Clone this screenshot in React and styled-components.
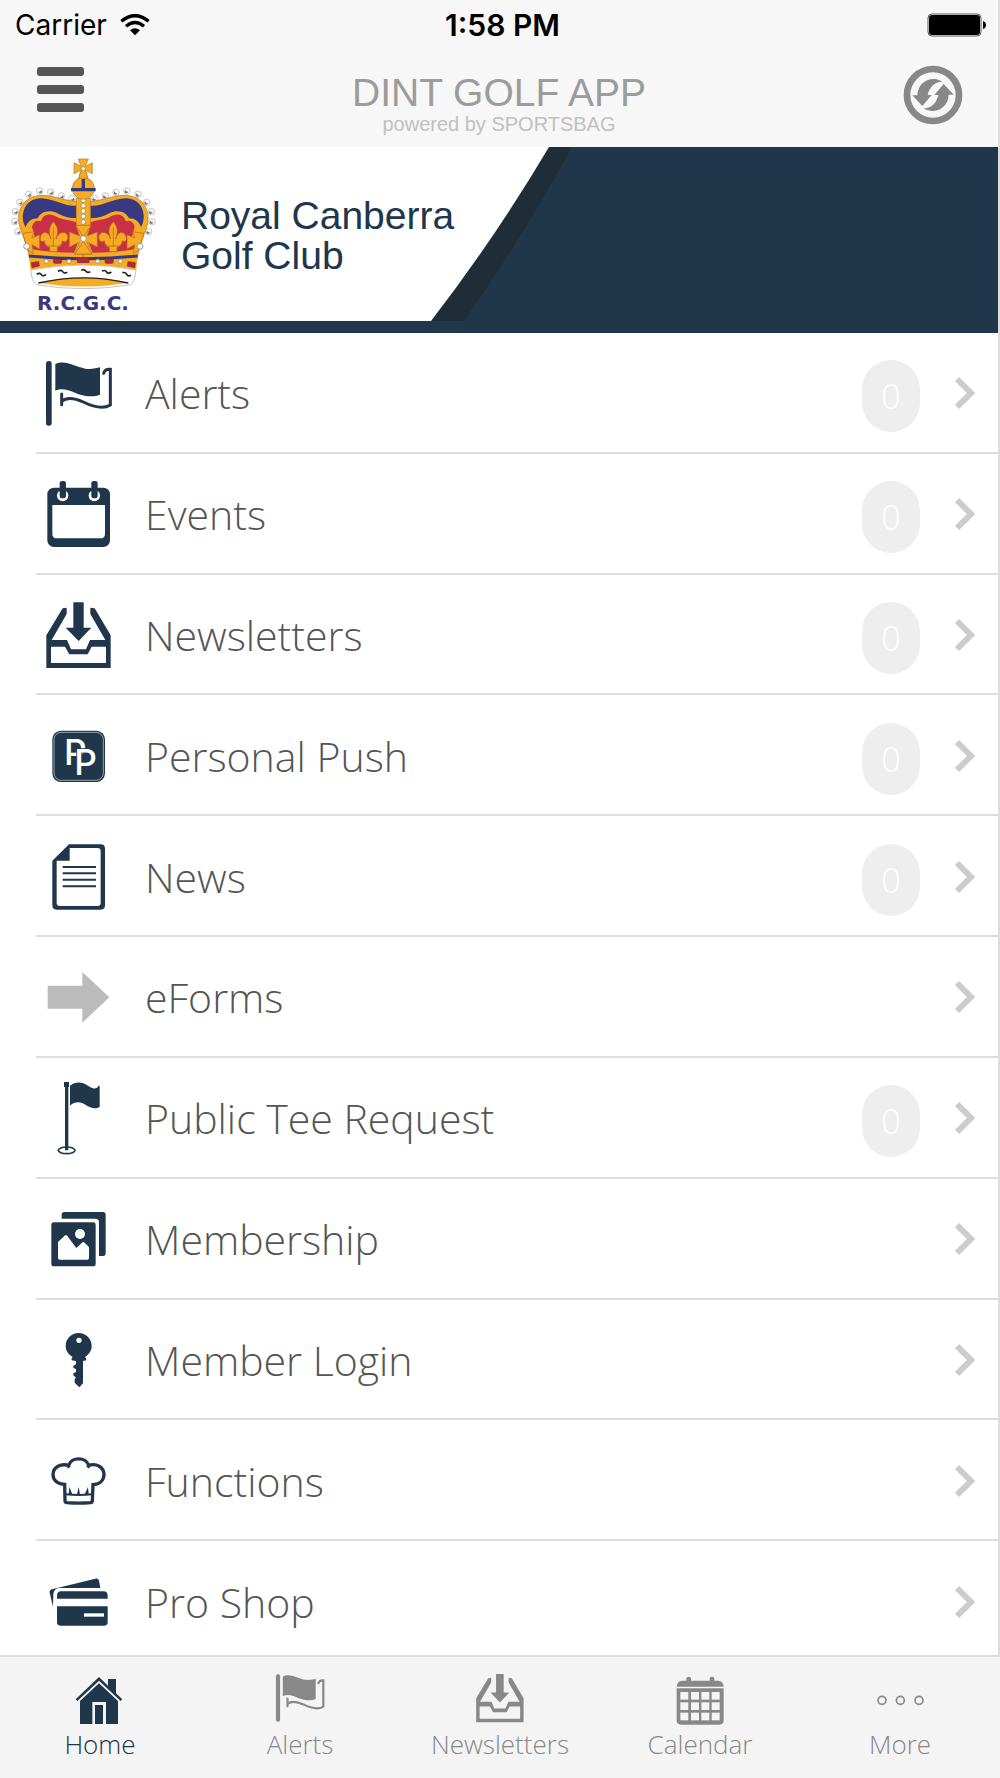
import React, { useState } from "react";
import styled, { createGlobalStyle } from "styled-components";

const GlobalStyle = createGlobalStyle`
  * {
    box-sizing: border-box;
  }

  body {
    margin: 0;
    background-color: #ffffff;
    font-family: "Open Sans", "Liberation Sans", sans-serif;
  }
`;

const Page = styled.div`
  display: flex;
  flex-direction: column;
  min-height: 100vh;
`;

const Screen = styled.div`
  flex: 1;
  display: flex;
  flex-direction: column;
  border-right: 2px solid #dddddd;
`;

const Header = styled.header`
  background-color: #f7f7f7;
`;

const StatusBar = styled.div`
  display: grid;
  grid-template-columns: 1fr auto 1fr;
  align-items: center;
  height: 50px;
  padding: 0 12px 0 15px;
  color: #000000;
  font-family: Inter, "Liberation Sans", sans-serif;
  font-size: 28px;
  line-height: 50px;
`;

const Carrier = styled.span`
  display: flex;
  align-items: center;
  gap: 13px;
`;

const Clock = styled.time`
  padding-left: 4px;
  font-size: 30px;
  font-weight: 600;
`;

const Battery = styled.svg`
  justify-self: end;
`;

const NavBar = styled.div`
  display: grid;
  grid-template-columns: 60px 1fr 60px;
  align-items: start;
  height: 97px;
  padding: 15px 35px 0;
`;

const IconButton = styled.button`
  display: flex;
  justify-content: center;
  align-items: center;
  height: 60px;
  padding: 0;
  border: none;
  background-color: transparent;
  cursor: pointer;
`;

const MenuButton = styled(IconButton)`
  flex-direction: column;
  align-items: flex-start;
  gap: 9px;
  height: 48px;
  padding-left: 2px;
`;

const MenuBar = styled.span`
  width: 47px;
  height: 9px;
  border-radius: 3px;
  background-color: #555555;
`;

const Brand = styled.div`
  padding-top: 8px;
  text-align: center;
  font-family: "Liberation Sans", Arial, sans-serif;
`;

const Title = styled.h1`
  margin: 0;
  color: #9c9c9c;
  font-size: 39px;
  font-weight: 400;
  line-height: 40px;
`;

const Subtitle = styled.p`
  margin: 0;
  color: #c0c0c0;
  font-size: 20px;
  line-height: 22px;
`;

const Banner = styled.section`
  position: relative;
  display: flex;
  align-items: flex-start;
  gap: 24px;
  height: 186px;
  padding: 8px 10px 0;
  background-color: #20374b;
`;

const BannerShape = styled.svg`
  position: absolute;
  top: 0;
  left: 0;
`;

const Crest = styled.svg`
  position: relative;
  flex: none;
`;

const ClubName = styled.h2`
  position: relative;
  margin: 0;
  padding-top: 41px;
  color: #20374b;
  font-family: "Liberation Sans", Arial, sans-serif;
  font-size: 39px;
  font-weight: 400;
  line-height: 40px;
`;

const Menu = styled.ul`
  flex: 1;
  display: grid;
  grid-auto-rows: minmax(100px, 1fr);
  margin: 0 0 -7px;
  padding: 0 0 0 36px;
  list-style: none;
`;

const MenuItem = styled.li`
  display: flex;
  border-bottom: 2px solid #dddddd;
`;

const MenuLink = styled.a`
  flex: 1;
  display: flex;
  align-items: center;
  padding: 2px 23px 0 0;
  color: #555555;
  text-decoration: none;
`;

const RowIcon = styled.svg`
  flex: none;
  width: 84px;
  height: 84px;
  color: ${({ $muted }) => ($muted ? "#bbbbbb" : "#20374b")};
`;

const Label = styled.span`
  flex: 1;
  padding-left: 25px;
  font-size: 41px;
  font-weight: 300;
  line-height: 56px;
`;

const Badge = styled.span`
  width: 58px;
  height: 72px;
  margin: 6px 35px 0 0;
  border-radius: 29px;
  background-color: #eeeeee;
  color: #ffffff;
  font-size: 34px;
  font-weight: 300;
  line-height: 72px;
  text-align: center;
`;

const TabBar = styled.nav`
  position: relative;
  display: grid;
  grid-template-columns: repeat(5, 1fr);
  padding: 13px 0 16px;
  border-top: 2px solid #dddddd;
  background-color: #f4f4f4;
`;

const Tab = styled.button`
  display: flex;
  flex-direction: column;
  align-items: center;
  padding: 0;
  border: none;
  background-color: transparent;
  color: ${({ $active }) => ($active ? "#20374b" : "#888888")};
  font-family: inherit;
  font-size: 26px;
  font-weight: 300;
  line-height: 36px;
  cursor: pointer;
`;

const TabIcon = styled.svg`
  width: 62px;
  height: 56px;
`;

const FlagShape = () => (
  <>
    <rect x="138" y="79" width="17" height="194" rx="8" fill="currentColor" />
    <path
      d="M166 88C197 75 222 95 256 102C274 104 290 101 300 98V180C281 188 257 186 234 178C209 167 190 158 166 168Z"
      fill="currentColor"
    />
    <path
      d="M185 178V210M185 200C201 186 226 191 250 202C280 217 310 224 331 211V104C321 103 313 108 311 116"
      fill="none"
      stroke="currentColor"
      strokeWidth="9"
      strokeLinecap="round"
    />
  </>
);

const InboxShape = () => (
  <>
    <path d="M220 802H251V878H274L236 918L197 878H220Z" fill="currentColor" />
    <path
      fillRule="evenodd"
      d="M200 818L188 820L139 901V999H332V901L284 820L271 818V837L316 915H270L258 943H213L201 915H155L200 837ZM153 935H195L208 958H263L275 935H318V984H153Z"
      fill="currentColor"
    />
  </>
);

const EventsShape = () => (
  <>
    <rect x="142" y="459" width="188" height="178" rx="20" fill="currentColor" />
    <path d="M157 511H315V597Q315 611 301 611H171Q157 611 157 597Z" fill="#fff" />
    {[188, 283].map((x) => (
      <g key={x}>
        <path d={`M${x - 11} 470A17 17 0 1 0 ${x + 11} 470Z`} fill="#fff" />
        <rect x={x - 9} y="439" width="19" height="52" rx="7" fill="currentColor" />
      </g>
    ))}
  </>
);

const PushShape = () => (
  <>
    <rect x="157" y="106" width="158" height="154" rx="26" fill="currentColor" />
    <rect
      x="162"
      y="111"
      width="148"
      height="144"
      rx="22"
      fill="none"
      stroke="#d5dade"
      strokeWidth="2"
    />
    <text
      x="192 223"
      y="210 240"
      fontFamily="Inter"
      fontSize="106"
      fontWeight="500"
      fill="#fff"
      stroke="#20374b"
      strokeWidth="5"
      paintOrder="stroke"
    >
      PP
    </text>
  </>
);

const NewsShape = () => (
  <>
    <path
      fillRule="evenodd"
      d="M207 447H302Q315 447 315 460V630Q315 643 302 643H170Q157 643 157 630V496ZM209 458V496H170V623Q170 632 180 632H293Q302 632 302 623V467Q302 458 293 458Z"
      fill="currentColor"
    />
    <path
      d="M188 515H288M188 534H288M188 553H288M188 573H288"
      stroke="currentColor"
      strokeWidth="6"
    />
  </>
);

const ArrowShape = () => (
  <path d="M143 873H247V832L328 908L247 984V942H143Z" fill="currentColor" />
);

const TeeShape = () => (
  <>
    <ellipse
      cx="200"
      cy="287"
      rx="25"
      ry="10"
      fill="none"
      stroke="currentColor"
      strokeWidth="5"
    />
    <path d="M192 82H207V97H205V287H195V97H192Z" fill="currentColor" />
    <path
      d="M210 93C228 79 246 82 264 93C277 102 288 106 296 93H299V156C288 164 272 161 257 151C242 140 225 140 210 153Z"
      fill="currentColor"
    />
  </>
);

const PhotosShape = () => (
  <>
    <path
      d="M185 491V479Q185 471 193 471H309Q317 471 317 479V595Q317 603 309 603H297V502Q297 491 286 491Z"
      fill="currentColor"
    />
    <rect x="154" y="502" width="133" height="132" rx="8" fill="currentColor" />
    <circle cx="240" cy="537" r="15" fill="#fff" />
    <path
      d="M174 561L194 542Q198 538 202 543L229 579L246 563Q250 559 254 563L267 576V609Q267 614 262 614H179Q174 614 174 609Z"
      fill="#fff"
    />
  </>
);

const KeyShape = () => (
  <path
    fillRule="evenodd"
    d="M236 833C258 833 275 850 275 872C275 886 268 896 256 904C255 908 260 909 259 915L249 917V984L238 996L224 982V971L228 967L220 960V954L228 950V942L220 937V931L228 927V917L215 915C213 909 218 908 217 904C205 897 197 886 197 872C197 850 214 833 236 833ZM237 847A8 8 0 1 0 237 863A8 8 0 1 0 237 847Z"
    fill="currentColor"
  />
);

const ChefShape = () => (
  <>
    <path
      d="M194 267C172 266 159 255 159 237C160 214 182 204 206 210C214 184 258 184 266 210C290 203 311 215 312 237C312 255 299 267 279 268L277 316Q277 321 271 322Q236 325 201 322Q195 321 195 316ZM202 207L208 217M269 207L263 217"
      fill="none"
      stroke="currentColor"
      strokeWidth="10"
    />
    <path d="M196 297Q236 301 277 297" fill="none" stroke="currentColor" strokeWidth="6" />
    <path
      d="M206 297L208 275L217 297ZM231 297L236 275L240 297ZM254 297L264 275L266 297Z"
      fill="currentColor"
    />
  </>
);

const CardsShape = () => (
  <>
    <path
      d="M159 633L149 591Q148 583 156 581L286 549Q295 547 297 555L301 577H180Q163 577 160 594Z"
      fill="currentColor"
    />
    <path
      d="M171 609V600Q171 587 184 587H310Q323 587 323 600V609ZM171 632H323V680Q323 690 313 690H181Q171 690 171 680Z"
      fill="currentColor"
    />
    <rect x="252" y="653" width="60" height="10" fill="#fff" />
  </>
);

const HomeShape = () => (
  <>
    <path
      d="M227 148L297 81L324 107V87H348V130L367 148L362 153L297 92L232 153Z"
      fill="currentColor"
    />
    <path d="M240 153L297 100L354 153V222H318V156H277V222H240Z" fill="currentColor" />
    <rect x="285" y="165" width="24" height="57" fill="currentColor" />
  </>
);

const CalendarShape = () => (
  <>
    <path
      d="M831 110Q832 92 848 92H860V86Q860 80 867 80Q874 80 874 86V92H930V86Q930 80 937 80Q944 80 944 86V92H955Q971 92 972 110Z"
      fill="currentColor"
    />
    <path d="M831 115H972V211Q972 224 959 224H844Q831 224 831 211Z" fill="currentColor" />
    {[126, 157, 188].map((y) =>
      [842, 874, 905, 936].map((x) => (
        <rect key={`${x}-${y}`} x={x} y={y} width="24" height="23" fill="#f4f4f4" />
      ))
    )}
  </>
);

const MoreShape = () => (
  <g fill="none" stroke="currentColor" strokeWidth="5">
    <circle cx="367" cy="421" r="12" />
    <circle cx="422" cy="421" r="12" />
    <circle cx="478" cy="421" r="12" />
  </g>
);

// One side of the crown, drawn twice and mirrored
const CrownHalf = () => (
  <>
    {[
      [216, 176],
      [184, 168],
      [152, 157],
      [119, 153],
      [86, 163],
      [60, 187],
      [46, 215],
      [44, 245],
      [54, 275],
    ].map(([cx, cy]) => (
      <g key={cx}>
        <circle cx={cx} cy={cy} r="10" fill="#f4f4f2" stroke="#b5b5b5" strokeWidth="2" />
        <circle cx={cx + 2} cy={cy + 2} r="5" fill="#77777a" />
        <circle cx={cx - 1} cy={cy - 2} r="4" fill="#ffffff" />
      </g>
    ))}
    <path
      d="M250 362H90L82 325L66 278C42 228 60 169 124 166C170 166 200 188 250 184Z"
      fill="#f7ab23"
      stroke="#a57a35"
      strokeWidth="2"
    />
    <path
      d="M77 262C57 228 73 176 122 175C168 177 195 201 229 197V234C207 235 190 230 172 220C145 207 121 217 113 235C95 235 82 245 77 262Z"
      fill="#373a82"
    />
    <path
      d="M91 322L104 290L96 260C100 244 112 239 123 244C127 224 150 216 171 231C187 241 208 238 229 247V260L240 292L222 338Q160 338 104 329Z"
      fill="#c92f45"
    />
    <path
      d="M160 245C180 267 172 282 168 297C176 272 202 271 204 292C203 306 193 308 187 302C186 314 178 321 172 322V335H149V322C141 320 134 314 133 302C126 308 119 303 121 292C125 271 149 274 153 297C148 280 143 266 160 245Z"
      fill="#f7ab23"
      stroke="#a8682c"
      strokeWidth="2"
    />
    <path d="M160 262V320M137 318H184" stroke="#a8682c" strokeWidth="2" />
    <path
      d="M68 280L103 275L95 294L119 284V327L96 314L100 340L84 332Z"
      fill="#f7ab23"
      stroke="#a8682c"
      strokeWidth="2"
    />
    <circle cx="80" cy="319" r="9" fill="#f4f4f2" stroke="#77777a" strokeWidth="2" />
  </>
);

const ClubCrest = () => (
  <Crest viewBox="30 45 441 480" width="147" height="160" role="img" aria-label="R.C.G.C. crest">
    <CrownHalf />
    <g transform="translate(500 0) scale(-1 1)">
      <CrownHalf />
    </g>
    <path
      d="M229 175H271V256L261 288L292 276V321L261 306L277 342H223L239 306L208 321V276L239 288L229 256Z"
      fill="#f7ab23"
      stroke="#a57a35"
      strokeWidth="2"
    />
    <path d="M227 256H273L250 290ZM225 342L250 304L275 342Z" fill="#f7ab23" stroke="#a8682c" strokeWidth="2" />
    {[181, 197, 213, 229, 246].map((y) => (
      <circle key={y} cx="250" cy={y} r="7" fill="#f8f6ee" stroke="#8b8475" strokeWidth="2" />
    ))}
    <circle cx="250" cy="296" r="9" fill="#f8f6ee" stroke="#777777" strokeWidth="2" />
    <path
      d="M241 96L237 118H263L259 96Z"
      fill="#f7ab23"
      stroke="#a57a35"
      strokeWidth="2"
    />
    <circle cx="250" cy="145" r="33" fill="#f7ab23" stroke="#a57a35" strokeWidth="2" />
    <path d="M213 149H287M250 117V149" stroke="#373a82" strokeWidth="10" />
    <path
      d="M235 57H265L256 79L277 68V101L256 91L264 115H236L243 91L222 101V68L243 79Z"
      fill="#f7ab23"
      stroke="#a57a35"
      strokeWidth="2"
    />
    <circle cx="250" cy="86" r="6" fill="#f8f6ee" stroke="#8b8475" strokeWidth="2" />
    <path d="M86 343Q250 367 414 343L408 392Q250 376 92 392Z" fill="#f7ab23" />
    <path d="M87 348Q250 364 413 348" fill="none" stroke="#373a82" strokeWidth="9" />
    <g fill="#b6283a" stroke="#7d2a2a" strokeWidth="2">
      <rect x="233" y="354" width="34" height="14" />
      <rect x="160" y="357" width="25" height="13" rx="5" />
      <rect x="315" y="357" width="25" height="13" rx="5" />
      <path d="M94 368L116 365L118 378L96 383ZM406 368L384 365L382 378L404 383Z" />
    </g>
    {[139, 207, 293, 361].map((x) => (
      <circle key={x} cx={x} cy="364" r="6" fill="#f8f6ee" stroke="#8b8475" strokeWidth="2" />
    ))}
    <path
      d="M92 390Q250 360 408 390Q405 422 392 434Q250 458 108 434Q95 422 92 390Z"
      fill="#ffffff"
      stroke="#c4c4c4"
      strokeWidth="3"
    />
    <path d="M115 429Q250 398 385 429Q250 450 115 429Z" fill="#f7ab23" />
    <path d="M115 429Q250 398 385 429" fill="none" stroke="#222222" strokeWidth="4" />
    <path
      d="M110 403Q120 397 124 404T138 403M174 394Q184 388 188 395T202 397M244 391Q252 386 257 393T271 395M306 393Q316 389 320 396T334 396M367 398Q377 396 380 403T393 406"
      fill="none"
      stroke="#222222"
      strokeWidth="5"
    />
    <text
      x="249"
      y="510"
      textAnchor="middle"
      fontFamily="DejaVu Sans, sans-serif"
      fontSize="60"
      fontWeight="700"
      fill="#373a82"
    >
      R.C.G.C.
    </text>
  </Crest>
);

const RefreshArrow = ({ transform }) => (
  <path
    transform={transform}
    d="M1236 285H1251C1252 253 1277 235 1302 236C1312 237 1320 240 1326 244C1304 243 1287 260 1282 284H1294L1266 317Z"
    fill="#888888"
  />
);

// Each viewBox is three units per pixel
const menuItems = [
  { label: "Alerts", viewBox: "108 49 252 252", shape: FlagShape, count: 0 },
  { label: "Events", viewBox: "108 412 252 252", shape: EventsShape, count: 0 },
  { label: "Newsletters", viewBox: "108 774 252 252", shape: InboxShape, count: 0 },
  { label: "Personal Push", viewBox: "108 56 252 252", shape: PushShape, count: 0 },
  { label: "News", viewBox: "108 419 252 252", shape: NewsShape, count: 0 },
  { label: "eForms", viewBox: "108 781 252 252", shape: ArrowShape, muted: true },
  { label: "Public Tee Request", viewBox: "108 64 252 252", shape: TeeShape, count: 0 },
  { label: "Membership", viewBox: "108 426 252 252", shape: PhotosShape },
  { label: "Member Login", viewBox: "108 788 252 252", shape: KeyShape },
  { label: "Functions", viewBox: "108 131 252 252", shape: ChefShape },
  { label: "Pro Shop", viewBox: "108 493 252 252", shape: CardsShape },
];

const tabs = [
  { label: "Home", viewBox: "207 60 186 168", shape: HomeShape },
  { label: "Alerts", viewBox: "110 62 252 228", shape: FlagShape },
  { label: "Newsletters", viewBox: "110 786 252 228", shape: InboxShape },
  { label: "Calendar", viewBox: "808 60 186 168", shape: CalendarShape },
  { label: "More", viewBox: "328 330 186 168", shape: MoreShape },
];

function App() {
  const [selectedTab, setSelectedTab] = useState("Home");

  return (
    <Page>
      <GlobalStyle />
      <Screen>
        <Header>
          <StatusBar>
            <Carrier>
              Carrier
              <svg width="30" height="22" viewBox="0 0 90 66" aria-hidden="true">
                <g fill="none" stroke="#000" strokeWidth="10">
                  <path d="M4 22Q45 -12 86 22" />
                  <path d="M18 37Q45 14 72 37" />
                </g>
                <path d="M30 49Q45 37 60 49L45 64Z" />
              </svg>
            </Carrier>
            <Clock>1:58 PM</Clock>
            <Battery width="59" height="24" viewBox="0 0 59 24" aria-hidden="true">
              <rect x="1" y="1" width="53" height="22" rx="4" fill="#fff" stroke="#555" />
              <rect x="2" y="2" width="51" height="20" rx="3" />
              <path d="M56 8Q59 9 59 12Q59 15 56 16Z" />
            </Battery>
          </StatusBar>
          <NavBar>
            <MenuButton type="button" aria-label="Menu">
              <MenuBar />
              <MenuBar />
              <MenuBar />
            </MenuButton>
            <Brand>
              <Title>DINT GOLF APP</Title>
              <Subtitle>powered by SPORTSBAG</Subtitle>
            </Brand>
            <IconButton type="button" aria-label="Refresh">
              <svg width="60" height="60" viewBox="1208 194 180 180">
                <circle cx="1298" cy="284" r="78" fill="none" stroke="#888888" strokeWidth="20" />
                <RefreshArrow />
                <RefreshArrow transform="rotate(180 1298 284)" />
              </svg>
            </IconButton>
          </NavBar>
        </Header>

        <Banner>
          <BannerShape width="575" height="174" viewBox="0 0 575 174" aria-hidden="true">
            <path d="M431 174H464Q524 88 572 0H549Z" fill="#1e2d38" />
            <path d="M0 0H549Q495 91 431 174H0Z" fill="#ffffff" />
          </BannerShape>
          <ClubCrest />
          <ClubName>
            Royal Canberra
            <br />
            Golf Club
          </ClubName>
        </Banner>

        <Menu>
          {menuItems.map(({ label, viewBox, shape: Shape, count, muted }) => (
            <MenuItem key={label}>
              <MenuLink href="#">
                <RowIcon viewBox={viewBox} $muted={muted} aria-hidden="true">
                  <Shape />
                </RowIcon>
                <Label>{label}</Label>
                {count !== undefined && <Badge>{count}</Badge>}
                <svg width="20" height="34" viewBox="0 0 20 34" aria-hidden="true">
                  <path d="M2 3L16 17L2 31" fill="none" stroke="#cccccc" strokeWidth="6" />
                </svg>
              </MenuLink>
            </MenuItem>
          ))}
        </Menu>
      </Screen>

      <TabBar>
        {tabs.map(({ label, viewBox, shape: Shape }) => (
          <Tab
            key={label}
            type="button"
            $active={selectedTab === label}
            onClick={() => setSelectedTab(label)}
          >
            <TabIcon viewBox={viewBox} aria-hidden="true">
              <Shape />
            </TabIcon>
            {label}
          </Tab>
        ))}
      </TabBar>
    </Page>
  );
}

export default App;
